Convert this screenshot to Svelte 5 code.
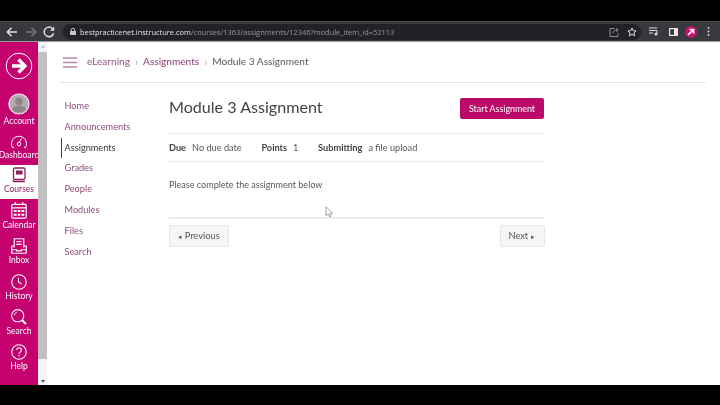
<script>
  const courseNav = ['Home', 'Announcements', 'Assignments', 'Grades', 'People', 'Modules', 'Files', 'Search'];
</script>

<div class="frame">
  <div class="letterbox top"></div>
  <header class="chrome">
    <svg class="tb" width="16" height="16" viewBox="0 0 16 16"><path d="M13 8H3.500M7.500 3.800 3.300 8l4.200 4.200" fill="none" stroke="#e4e4e4" stroke-width="1.500"/></svg>
    <svg class="tb fwd" width="16" height="16" viewBox="0 0 16 16"><path d="M3 8h9.500M8.500 3.800 12.700 8l-4.200 4.200" fill="none" stroke="#77797c" stroke-width="1.500"/></svg>
    <svg class="tb reload" width="14" height="14" viewBox="0 0 14 14"><path d="M11.600 8.200A4.800 4.800 0 1 1 10.400 3.500" fill="none" stroke="#e4e4e4" stroke-width="1.400"/><path d="M12.200 1.600v4.200H8z" fill="#e4e4e4"/></svg>
    <div class="omnibox">
      <svg width="6" height="7" viewBox="0 0 6 7" class="lock"><rect y="3" width="6" height="4" fill="#c4c4c4"/><path d="M1.300 3V2a1.700 1.700 0 0 1 3.400 0v1" fill="none" stroke="#c4c4c4"/></svg>
      <span class="url"><b>bestpracticenet.instructure.com</b>/courses/1363/assignments/12346?module_item_id=52113</span>
      <svg class="share" width="10" height="10" viewBox="0 0 10 10"><path d="M5.500 1.500H1v8h8V6M4 6c0-2 1.500-3 5-3M7 1l2 2-2 2" fill="none" stroke="#9a9a9a" stroke-width=".9"/></svg>
      <svg class="star" width="10" height="10" viewBox="0 0 10 10"><path d="M5 1l1.200 2.700 2.900.3-2.200 1.900.7 2.900L5 7.300 2.400 8.800l.7-2.900L.9 4l2.900-.3z" fill="none" stroke="#e2e2e2"/></svg>
    </div>
    <div class="exts">
      <svg width="10" height="9" viewBox="0 0 10 9"><path d="M0 1h8M0 3.500h8M0 6h4" stroke="#dcdcdc"/><circle cx="7" cy="7" r="1.500" fill="#dcdcdc"/><path d="M8 7V3.500" stroke="#dcdcdc"/></svg>
      <svg class="side" width="9" height="8" viewBox="0 0 9 8"><rect x=".6" y=".6" width="7.800" height="6.800" fill="none" stroke="#e8e8e8" stroke-width="1.200"/><rect x="5" y="1" width="3" height="6" fill="#e8e8e8"/></svg>
      <span class="avatar"><svg width="8" height="8" viewBox="0 0 8 8"><path d="M1 7 6 2M2.500 1.500H6.500V5.500" fill="none" stroke="#fff" stroke-width="1.700"/></svg></span>
      <svg class="dots" width="3" height="9" viewBox="0 0 3 9"><circle cx="1.500" cy="1" r=".9" fill="#ddd"/><circle cx="1.500" cy="4.500" r=".9" fill="#ddd"/><circle cx="1.500" cy="8" r=".9" fill="#ddd"/></svg>
    </div>
  </header>

  <div class="page">
    <nav class="global">
      <div class="logo">
        <svg width="28" height="28" viewBox="0 0 28 28"><circle cx="14" cy="14" r="12.800" fill="none" stroke="#fff"/><path d="M7 14h12M13.500 7.500 20 14l-6.500 6.500" fill="none" stroke="#fff" stroke-width="3.400"/></svg>
      </div>
      <a class="item account">
        <svg width="22" height="22" viewBox="0 0 22 22"><circle cx="11" cy="11" r="10" fill="#b3a9ae" stroke="#f4e5ee" stroke-width="1.200"/><circle cx="11" cy="8.500" r="3.800" fill="#8e8489"/><path d="M4 17c1.500-3.500 4-4.200 7-4.200s5.500.7 7 4.200a10 10 0 0 1-14 0z" fill="#8e8489"/></svg>
        <span>Account</span>
      </a>
      <a class="item dash">
        <svg width="18" height="14" viewBox="0 0 18 14"><path d="M4 12.500H2.500A7.500 7.500 0 1 1 15.500 12.500H14" fill="none" stroke="#fff"/><path d="M9 8 11.500 3.500" stroke="#fff"/><circle cx="9" cy="9" r="1.800" fill="none" stroke="#fff"/></svg>
        <span>Dashboard</span>
      </a>
      <a class="item active">
        <svg width="14" height="16" viewBox="0 0 14 16"><rect x="1.500" y="1" width="11.500" height="11.500" rx="1.500" fill="none" stroke="#8f1d60" stroke-width="1.300"/><rect x="4" y="3.500" width="6.500" height="4" fill="#8f1d60"/><path d="M1.500 13v1.500H13" fill="none" stroke="#8f1d60" stroke-width="1.300"/></svg>
        <span>Courses</span>
      </a>
      <a class="item">
        <svg width="16" height="17" viewBox="0 0 15 16"><rect x=".7" y="2.200" width="13.600" height="13" rx="1" fill="none" stroke="#fff" stroke-width="1.100"/><path d="M.7 5.500h13.600M4 0v3M11 0v3" stroke="#fff" stroke-width="1.100"/><path d="M2.500 7.500h10v2h-10zM2.500 11h10v2h-10z" fill="#fff"/><path d="M5.800 7v7M9.200 7v7" stroke="#c5006f"/></svg>
        <span>Calendar</span>
      </a>
      <a class="item">
        <svg width="16" height="16" viewBox="0 0 15 15"><path d="M3 9V.7h9V9M5 3.500h5M5 6h5M.7 7.500v6.800h13.600V7.500H12M.7 7.500H3M.7 11h4.500v1h4.600v-1h4.500" fill="none" stroke="#fff" stroke-width="1.100"/></svg>
        <span>Inbox</span>
      </a>
      <a class="item">
        <svg width="16" height="16" viewBox="0 0 15 15"><circle cx="7.500" cy="7.500" r="6.800" fill="none" stroke="#fff" stroke-width="1"/><path d="M7 3.500v4l3 2" fill="none" stroke="#fff"/></svg>
        <span>History</span>
      </a>
      <a class="item">
        <svg width="16" height="16" viewBox="0 0 15 15"><circle cx="6.300" cy="6.300" r="5.700" fill="none" stroke="#fff"/><path d="M3 6a3.500 3.500 0 0 1 2.500-3" fill="none" stroke="#fff" stroke-width=".8"/><path d="m10.500 10.500 3.500 3.500" stroke="#fff" stroke-width="2"/></svg>
        <span>Search</span>
      </a>
      <a class="item">
        <svg width="16" height="16" viewBox="0 0 15 15"><circle cx="7.500" cy="7.500" r="6.800" fill="none" stroke="#fff"/><path d="M5.300 5.600a2.200 2.200 0 1 1 3.300 2c-.8.500-1.100.9-1.100 1.700" fill="none" stroke="#fff"/><circle cx="7.500" cy="11" r=".7" fill="#fff"/></svg>
        <span>Help</span>
      </a>
    </nav>

    <div class="scrollbar">
      <i class="up"></i>
      <div class="thumb"></div>
      <i class="down"></i>
    </div>

    <div class="main">
      <div class="crumbs">
        <svg class="burger" width="14" height="11" viewBox="0 0 14 11"><path d="M0 1h14M0 5.500h14M0 10h14" stroke="#b98aa6" stroke-width="1.300"/></svg>
        <a class="c1">eLearning</a><span class="sep">›</span><a class="c2">Assignments</a><span class="sep">›</span><span class="c3">Module 3 Assignment</span>
      </div>

      <div class="columns">
        <ul class="course-nav">
          {#each courseNav as item}
            <li class:current={item === 'Assignments'}>{item}</li>
          {/each}
        </ul>

        <section class="content">
          <div class="title-row">
            <h1>Module 3 Assignment</h1>
            <button class="primary">Start Assignment</button>
          </div>
          <div class="details">
            <span><b>Due</b>No due date</span>
            <span><b>Points</b>1</span>
            <span><b>Submitting</b>a file upload</span>
          </div>
          <p class="desc">Please complete the assignment below</p>
          <div class="pager">
            <button><small>◂</small> Previous</button>
            <button>Next <small>▸</small></button>
          </div>
          <svg class="cursor" width="9" height="12" viewBox="0 0 9 12"><path d="M1 .8v9l2.200-1.800 1.500 3 1.500-.8-1.400-2.900h2.900z" fill="#fff" stroke="#8a8a8a" stroke-width=".8"/></svg>
        </section>
      </div>
    </div>
  </div>
  <div class="letterbox bottom"></div>
</div>

<style>
  :global(body) { margin: 0; background: #000; }
  .frame { width: 720px; height: 405px; display: flex; flex-direction: column; overflow: hidden; font-family: Lato, "Liberation Sans", sans-serif; filter: blur(0.35px); }
  .letterbox { background: #000; flex: none; }
  .top { height: 21px; }
  .bottom { height: 20px; }

  .chrome { height: 21px; flex: none; background: #38393c; display: flex; align-items: center; padding: 0 0 0 4px; box-sizing: border-box; border-top: 1px solid #4a4a4c; border-bottom: 1px solid #9c9c9e; }
  .tb { flex: none; }
  .fwd { margin-left: 3px; }
  .reload { margin-left: 3px; }
  .omnibox { margin-left: 7px; width: 578px; height: 16px; border-radius: 8px; background: #212225; display: flex; align-items: center; padding: 0 4px 0 7px; box-sizing: border-box; flex: none; }
  .lock { flex: none; }
  .url { margin-left: 4px; font: 7.450px "Open Sans", sans-serif; color: #96989b; white-space: nowrap; flex: 1; }
  .url b { font-weight: 400; color: #e6e6e6; }
  .share { margin-right: 8px; flex: none; }
  .star { flex: none; }
  .exts { display: flex; align-items: center; margin-left: 8px; }
  .side { margin-left: 10px; }
  .avatar { width: 12px; height: 12px; border-radius: 50%; background: #c4116f; display: flex; align-items: center; justify-content: center; margin-left: 7px; }
  .dots { margin-left: 10px; }

  .page { flex: 1; display: flex; background: #fff; min-height: 0; }
  .global { width: 38px; flex: none; background: #c5006f; display: flex; flex-direction: column; }
  .logo { height: 48px; display: flex; align-items: center; justify-content: center; flex: none; }
  .item { display: flex; flex-direction: column; align-items: center; color: #fff; font-size: 8.500px; line-height: 11px; height: 35.400px; flex: none; white-space: nowrap; justify-content: flex-end; padding-bottom: 3.600px; box-sizing: border-box; gap: 1px; }
  .account { height: 41px; }
  .dash { height: 34px; }
  .active { background: #fff; color: #8f1d60; height: 34px; }

  .scrollbar { width: 9px; flex: none; background: #f3f3f3; display: flex; flex-direction: column; align-items: center; }
  .up, .down { width: 0; height: 0; border-left: 2px solid transparent; border-right: 2px solid transparent; flex: none; }
  .up { border-bottom: 3px solid #bdbdbd; margin: 3px 0 4px; }
  .down { border-top: 3px solid #555; margin: auto 0 2px; }
  .thumb { height: 307px; flex: none; width: 9px; background: #c1c1c1; }

  .main { flex: 1; padding: 0 14px 0 14px; min-width: 0; }
  .crumbs { height: 38px; padding-bottom: 2px; margin-left: -1px; display: flex; align-items: center; border-bottom: 1px solid #e6e6e6; font-size: 10.100px; padding-left: 4px; box-sizing: content-box; }
  .burger { margin-right: 10px; margin-left: -1px; margin-top: 2px; flex: none; }
  .c1, .c2 { color: #8a3a6e; }
  .c1 { color: #9a4f80; }
  .c3 { color: #55595c; }
  .sep { color: #aaa; margin: 0 5px; font-size: 11px; }

  .columns { display: flex; }
  .course-nav { list-style: none; margin: 13px 0 0 0; padding: 0; width: 108px; flex: none; font-size: 9.200px; color: #8f4a78; }
  .course-nav li { height: 20.800px; line-height: 20.800px; padding-left: 2.500px; border-left: 1.500px solid transparent; }
  .course-nav li.current { color: #333a3e; border-left-color: #3d4147; }

  .content { width: 376px; flex: none; position: relative; color: #55595c; }
  .title-row { display: flex; align-items: flex-start; justify-content: space-between; height: 51px; padding-top: 15px; box-sizing: border-box; border-bottom: 1px solid #e8e8e8; }
  h1 { margin: -2px 0 0; font-weight: 400; font-size: 16.100px; line-height: 22px; color: #3f4448; }
  .primary { width: 84px; height: 21px; padding: 0; background: #bb0a6a; color: #fff; border: 0; border-radius: 2px; font: 8.900px Lato, sans-serif; margin-right: 1px; }
  .details { height: 27px; display: flex; align-items: center; border-bottom: 1px solid #e8e8e8; font-size: 9.200px; gap: 19.700px; }
  .details b { color: #3f4448; font-weight: 700; margin-right: 6px; }
  .desc { margin: 17px 0 0; font-size: 9.050px; line-height: 12px; height: 38px; border-bottom: 2px solid #ececec; }
  .pager { display: flex; justify-content: space-between; margin-top: 6px; }
  .pager button { height: 22px; padding: 0 0 2px; background: #f5f5f5; border: 1px solid #e6e6e6; border-radius: 2px; color: #55595c; font: 9.300px Lato, sans-serif; width: 60px; }
  .pager button:last-child { width: 45px; padding-right: 2px; }
  .pager small { font-size: 6.500px; }
  .cursor { position: absolute; left: 156px; top: 123px; }
</style>
